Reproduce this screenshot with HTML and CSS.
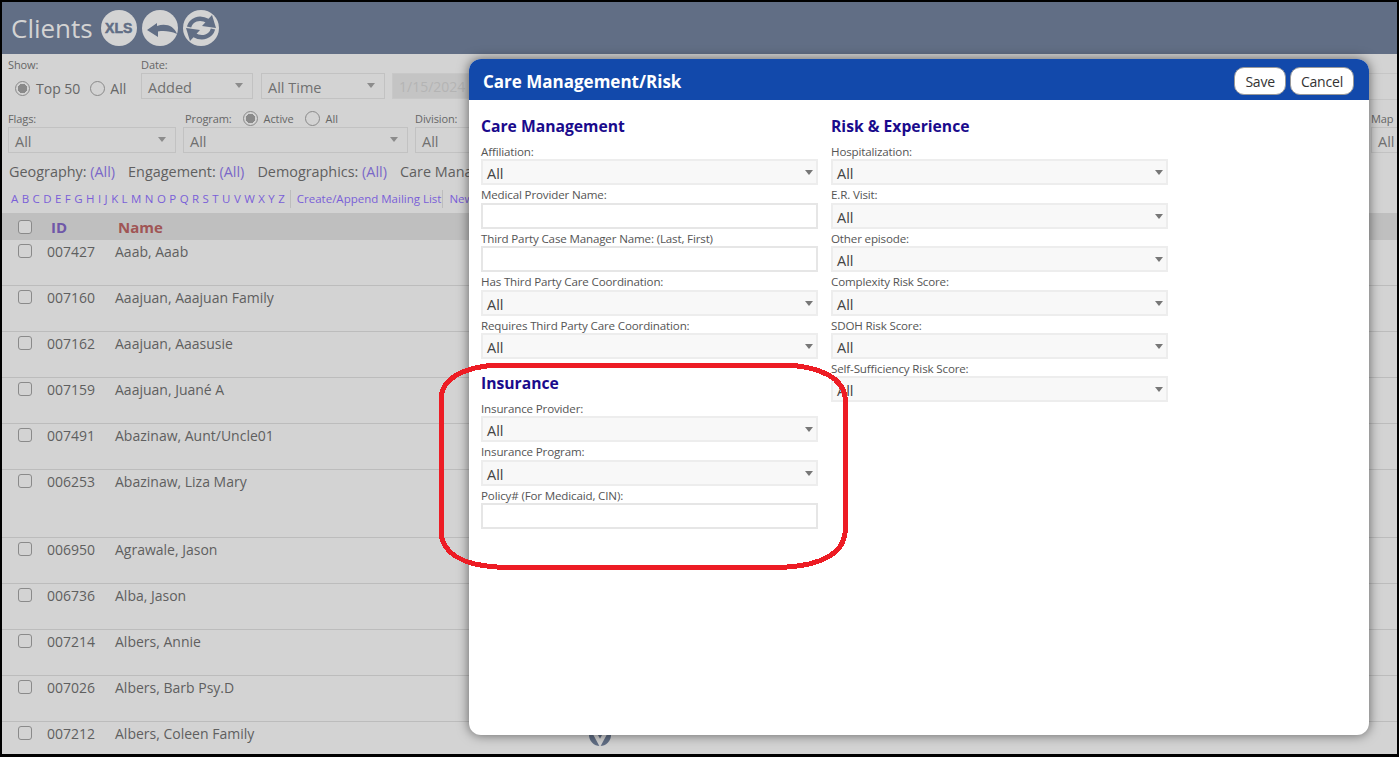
FILE: index.html
```html
<!DOCTYPE html>
<html lang="en">
<head>
    <meta charset="UTF-8">
    <title>Clients</title>
    <link rel="stylesheet" href="styles.css">
</head>
<body>
    <div class="page">
        <header class="top-bar">
            <h1>Clients</h1>
            <span class="round-icon xls">XLS</span>
            <span class="round-icon">
                <svg width="36" height="36" viewBox="0 0 36 36"><path d="M5 20L15 13V16C24 13 32 16 35 24 28 21 22 20.5 16 21.5V27Z" fill="#616e85"/></svg>
            </span>
            <span class="round-icon">
                <svg width="36" height="36" viewBox="0 0 36 36">
                    <g id="half-arrow">
                        <path d="M6 17C8 10 16 6 25 11" fill="none" stroke="#616e85" stroke-width="4.5"/>
                        <path d="M19 16L33 18 29 5Z" fill="#616e85"/>
                    </g>
                    <use href="#half-arrow" transform="rotate(180 18 18)"/>
                </svg>
            </span>
        </header>

        <section class="filters">
            <div class="filter-row first">
                <div class="show-group">
                    <div class="small-label">Show:</div>
                    <div class="radio-line big">
                        <span class="radio on"></span><span>Top 50</span>
                        <span class="radio"></span><span>All</span>
                    </div>
                </div>
                <div class="filter">
                    <div class="small-label">Date:</div>
                    <div class="fake-select dim w-112">Added</div>
                </div>
                <div class="filter">
                    <div class="small-label">&nbsp;</div>
                    <div class="fake-select dim w-124">All Time</div>
                </div>
                <div class="filter date-filter">
                    <div class="small-label">&nbsp;</div>
                    <div class="date-box">1/15/2024</div>
                </div>
            </div>
            <div class="filter-row second">
                <div class="filter">
                    <div class="small-label">Flags:</div>
                    <div class="fake-select dim w-168">All</div>
                </div>
                <div class="filter">
                    <div class="small-label radio-line program-line">
                        <span>Program:</span>
                        <span class="radio on"></span><span>Active</span>
                        <span class="radio"></span><span>All</span>
                    </div>
                    <div class="fake-select dim w-225">All</div>
                </div>
                <div class="filter">
                    <div class="small-label">Division:</div>
                    <div class="fake-select dim w-120">All</div>
                </div>
            </div>
            <div class="summary-row">
                <span>Geography: <a>(All)</a></span>
                <span>Engagement: <a>(All)</a></span>
                <span>Demographics: <a>(All)</a></span>
                <span>Care Management</span>
            </div>
            <div class="letters-row">
                <span class="letters">A B C D E F G H I J K L M N O P Q R S T U V W X Y Z</span>
                <span class="link-cell">Create/Append Mailing List</span>
                <span class="link-cell">New</span>
            </div>
        </section>

        <div class="edge-lines"></div>
        <div class="map-filter">
            <div class="small-label">Map</div>
            <div class="fake-select dim w-120">All</div>
        </div>

        <div class="table-head">
            <span class="check"></span>
            <span class="col-id">ID</span>
            <span class="col-name">Name</span>
        </div>
        <div class="client-row"><span class="check"></span><span class="id">007427</span><span>Aaab, Aaab</span></div>
        <div class="client-row"><span class="check"></span><span class="id">007160</span><span>Aaajuan, Aaajuan Family</span></div>
        <div class="client-row"><span class="check"></span><span class="id">007162</span><span>Aaajuan, Aaasusie</span></div>
        <div class="client-row"><span class="check"></span><span class="id">007159</span><span>Aaajuan, Juané A</span></div>
        <div class="client-row"><span class="check"></span><span class="id">007491</span><span>Abazinaw, Aunt/Uncle01</span></div>
        <div class="client-row tall"><span class="check"></span><span class="id">006253</span><span>Abazinaw, Liza Mary</span></div>
        <div class="client-row"><span class="check"></span><span class="id">006950</span><span>Agrawale, Jason</span></div>
        <div class="client-row"><span class="check"></span><span class="id">006736</span><span>Alba, Jason</span></div>
        <div class="client-row"><span class="check"></span><span class="id">007214</span><span>Albers, Annie</span></div>
        <div class="client-row"><span class="check"></span><span class="id">007026</span><span>Albers, Barb Psy.D</span></div>
        <div class="client-row"><span class="check"></span><span class="id">007212</span><span>Albers, Coleen Family</span></div>
        <span class="more-btn">
            <svg width="22" height="22" viewBox="0 0 22 22"><path d="M4 6L11 19 18 6" fill="none" stroke="#d3d3d3" stroke-width="4"/></svg>
        </span>
    </div>

    <div class="modal">
        <div class="modal-head">
            <h2>Care Management/Risk</h2>
            <div class="modal-buttons">
                <button>Save</button>
                <button>Cancel</button>
            </div>
        </div>
        <div class="modal-body">
            <div class="form-col">
                <h3>Care Management</h3>
                <label>Affiliation:</label>
                <div class="fake-select">All</div>
                <label>Medical Provider Name:</label>
                <div class="text-box"></div>
                <label>Third Party Case Manager Name: (Last, First)</label>
                <div class="text-box"></div>
                <label>Has Third Party Care Coordination:</label>
                <div class="fake-select">All</div>
                <label>Requires Third Party Care Coordination:</label>
                <div class="fake-select">All</div>
                <h3 class="next-head">Insurance</h3>
                <label>Insurance Provider:</label>
                <div class="fake-select">All</div>
                <label>Insurance Program:</label>
                <div class="fake-select">All</div>
                <label>Policy# (For Medicaid, CIN):</label>
                <div class="text-box"></div>
            </div>
            <div class="form-col">
                <h3>Risk &amp; Experience</h3>
                <label>Hospitalization:</label>
                <div class="fake-select">All</div>
                <label>E.R. Visit:</label>
                <div class="fake-select">All</div>
                <label>Other episode:</label>
                <div class="fake-select">All</div>
                <label>Complexity Risk Score:</label>
                <div class="fake-select">All</div>
                <label>SDOH Risk Score:</label>
                <div class="fake-select">All</div>
                <label>Self-Sufficiency Risk Score:</label>
                <div class="fake-select">All</div>
            </div>
        </div>
    </div>

    <svg class="red-mark" width="420" height="216" viewBox="0 0 420 216">
        <path d="M60 4H350C385 6 406 18 408 36V172C406 192 385 204 350 206H60C25 204 6 192 4 172V36C6 18 25 6 60 4Z" fill="none" stroke="#ed1c24" stroke-width="5" shape-rendering="crispEdges"/>
    </svg>
</body>
</html>
```

FILE: styles.css
```css
* {
    margin: 0;
    padding: 0;
    box-sizing: border-box;
}

html, body {
    height: 100%;
    overflow: hidden;
}

body {
    font-family: "Open Sans", "Noto Sans", sans-serif;
    background-color: #000;
    padding: 2px;
    position: relative;
}

.page {
    height: 752px;
    overflow: hidden;
    background-color: #d3d3d3;
    color: #5f5f5f;
    position: relative;
}

.top-bar {
    height: 52px;
    background-color: #616e85;
    display: flex;
    align-items: center;
    padding-left: 9px;
    gap: 5px;
}

.top-bar h1 {
    font-size: 26px;
    font-weight: 400;
    color: #d3d3d3;
    margin-right: 3px;
}

.round-icon {
    width: 36px;
    height: 36px;
    border-radius: 50%;
    background-color: #d3d3d3;
    display: flex;
    align-items: center;
    justify-content: center;
}

.xls {
    font-family: "Liberation Sans", sans-serif;
    font-weight: 700;
    font-size: 14px;
    color: #616e85;
    -webkit-text-stroke: 0.5px #616e85;
}

.filters {
    height: 159px;
    padding: 0 6px;
}

.filter-row {
    display: flex;
    gap: 8px;
}

.first {
    padding-top: 2px;
    height: 54px;
}

.second {
    height: 52px;
    padding-top: 2px;
    gap: 7px;
}

.small-label {
    font-size: 11px;
    line-height: 17px;
    color: #666;
    letter-spacing: -0.1px;
}

.show-group {
    width: 125px;
}

.radio-line {
    display: flex;
    align-items: center;
    gap: 6px;
}

.big {
    font-size: 14px;
    padding: 6px 0 0 7px;
    color: #666;
}

.big > span:last-child {
    margin-left: -1px;
}

.program-line {
    padding-left: 2px;
}

.radio-line .radio {
    margin-left: 5px;
}

.big .radio {
    margin-left: 4px;
}

.big .radio:first-child {
    margin-left: 0;
}

.radio {
    width: 15px;
    height: 15px;
    border: 1px solid #8a8a8a;
    border-radius: 50%;
    display: inline-block;
    background-color: #d3d3d3;
}

.on {
    background-image: radial-gradient(circle, #8a8a8a 0 4.5px, transparent 5px);
}

.date-filter {
    margin-left: -1px;
}

.date-box {
    width: 100px;
    height: 26px;
    background-color: #c4c4c4;
    border: 1px solid #c8c8c8;
    color: #b4b4b4;
    font-size: 14px;
    line-height: 26px;
    padding-left: 6px;
}

.fake-select {
    position: relative;
    height: 26px;
    font-size: 14.5px;
    line-height: 26px;
    padding-left: 4px;
    background-color: #f8f8f8;
    border: 2px solid #ededed;
    color: #444;
}

.fake-select::after {
    content: "";
    position: absolute;
    right: 3px;
    top: 9px;
    border-left: 4.5px solid transparent;
    border-right: 4.5px solid transparent;
    border-top: 5px solid #777;
}

.dim {
    background-color: #d3d3d3;
    border: 1px solid #c2c2c2;
    color: #707070;
    line-height: 27px;
    padding-left: 6px;
}

.dim::after {
    right: 9px;
    top: 9px;
    border-top-color: #8c8c8c;
}

.w-112 { width: 112px; }
.w-124 { width: 124px; }
.w-168 { width: 168px; }
.w-225 { width: 225px; }
.w-120 { width: 120px; }

.edge-lines {
    position: absolute;
    left: 1367px;
    top: 71px;
    width: 28px;
    height: 27px;
    border-top: 1px solid #c6c6c6;
    border-bottom: 1px solid #c6c6c6;
}

.map-filter {
    position: absolute;
    left: 1369px;
    top: 108px;
    width: 26px;
    overflow: hidden;
}

.summary-row {
    display: flex;
    gap: 13px;
    font-size: 14.4px;
    line-height: 20px;
    height: 30px;
    padding-top: 2px;
    padding-left: 1px;
    white-space: nowrap;
}

.summary-row a {
    color: #7a68c8;
}

.letters-row {
    display: flex;
    align-items: center;
    font-size: 11.5px;
    line-height: 18px;
    color: #7a5fd8;
    padding-left: 3px;
    white-space: nowrap;
}

.letters {
    word-spacing: 0.45px;
    padding-right: 5px;
    border-right: 1px solid #bdbdbd;
}

.link-cell {
    padding: 0 1px 0 6px;
    border-right: 1px solid #bdbdbd;
}

.link-cell:last-child {
    border-right: none;
}

.table-head {
    height: 27px;
    background-color: #bfbfbf;
    display: flex;
    align-items: center;
    padding-left: 16px;
    font-size: 15px;
    font-weight: 700;
}

.col-id {
    color: #6f57a8;
    width: 67px;
    margin-left: 19px;
}

.col-name {
    color: #a05555;
}

.check {
    width: 14px;
    height: 14px;
    border: 1px solid #8a8a8a;
    border-radius: 3px;
    background-color: #d3d3d3;
    flex-shrink: 0;
}

.client-row {
    height: 46px;
    border-bottom: 1px solid #bcbcbc;
    display: flex;
    align-items: flex-start;
    padding: 4px 0 0 16px;
    font-size: 14px;
    line-height: 16px;
}

.client-row .id {
    width: 68px;
    margin-left: 15px;
}

.tall {
    height: 68px;
}

.more-btn {
    position: absolute;
    left: 587px;
    top: 722px;
    width: 22px;
    height: 22px;
    border-radius: 50%;
    background-color: #616e85;
}

.modal {
    position: absolute;
    left: 469px;
    top: 59px;
    width: 900px;
    height: 676px;
    background-color: #fff;
    border-radius: 12px;
    box-shadow: 0 0 12px rgba(0, 0, 0, 0.55);
    overflow: hidden;
}

.modal-head {
    height: 41px;
    background-color: #1249ab;
    display: flex;
    align-items: center;
    justify-content: space-between;
    padding: 2px 15px 0 14px;
}

.modal-head h2 {
    font-size: 17px;
    font-weight: 700;
    color: #fff;
    padding-top: 1px;
}

.modal-buttons {
    display: flex;
    gap: 4px;
}

.modal-buttons button {
    height: 28px;
    padding: 1px 10px 0;
    font-family: inherit;
    font-size: 14px;
    letter-spacing: -0.2px;
    color: #333;
    background-color: #fff;
    border: 1px solid #999;
    border-radius: 10px;
}

.modal-body {
    display: flex;
    gap: 13px;
    padding: 15px 0 0 12px;
}

.form-col {
    width: 337px;
}

.form-col h3 {
    font-size: 15.7px;
    line-height: 22px;
    color: #1a0a8c;
    margin-bottom: 5px;
}

.form-col .next-head {
    margin-top: 13px;
    margin-bottom: 5px;
}

.form-col label {
    display: block;
    font-size: 11.6px;
    letter-spacing: -0.16px;
    line-height: 17.4px;
    padding-top: 1px;
    height: 17.4px;
    color: #555;
    white-space: nowrap;
}

.text-box {
    height: 26px;
    background-color: #fff;
    border: 2px solid #e6e6e6;
}

.red-mark {
    position: absolute;
    left: 437px;
    top: 361px;
}
```
